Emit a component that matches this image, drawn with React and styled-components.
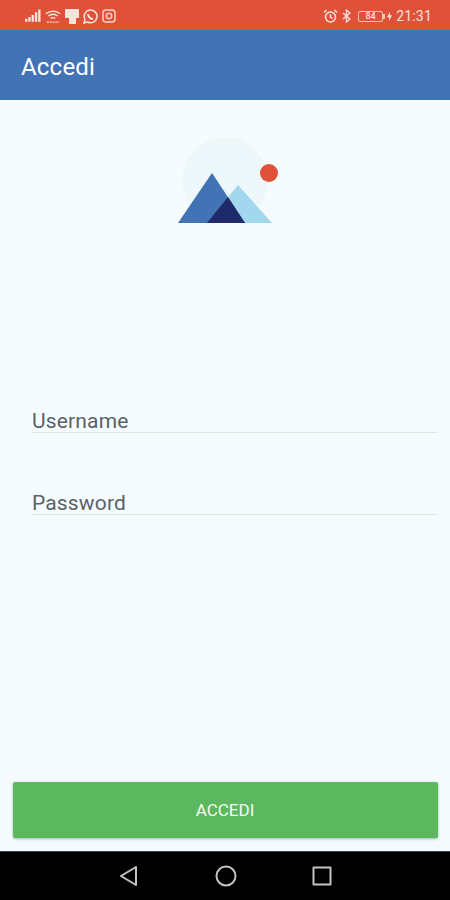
import styled, { createGlobalStyle } from 'styled-components';

const GlobalStyle = createGlobalStyle`
    html, body {
        margin: 0;
        padding: 0;
        background: #000;
    }
    * {
        box-sizing: border-box;
    }
`;

const Screen = styled.div`
    width: 450px;
    height: 900px;
    display: flex;
    flex-direction: column;
    font-family: Roboto, "Liberation Sans", sans-serif;
    background-color: #f4fcff;
    overflow: hidden;
`;
const StatusBar = styled.div`
    height: 30px;
    flex: none;
    background-color: #e0513a;
    display: flex;
    align-items: center;
    justify-content: space-between;
    padding: 2px 18px 0 25px;
    color: #fbe3dc;
`;
const StatusGroup = styled.div`
    display: flex;
    align-items: center;
    gap: 4px;
`;
const Clock = styled.span`
    font-size: 14px;
    letter-spacing: 0.2px;
`;
const Battery = styled.div`
    width: 25px;
    height: 11px;
    margin: 0 0 0 3px;
    border: 1px solid #f6c4b6;
    border-radius: 2px;
    font-size: 9px;
    font-weight: 500;
    line-height: 9px;
    text-align: center;
    position: relative;
    &:after {
        content: '';
        position: absolute;
        right: -3px;
        top: 2px;
        width: 2px;
        height: 5px;
        background-color: #f6c4b6;
    }
`;
const AppBar = styled.div`
    height: 70px;
    flex: none;
    background-color: #4173b5;
    display: flex;
    align-items: center;
    padding: 3px 21px 0;
    color: #fff;
    font-size: 24px;
    letter-spacing: 0.2px;
`;
const Main = styled.main`
    flex: 1;
    display: flex;
    flex-direction: column;
    align-items: center;
    padding-top: 36px;
`;
const Logo = styled.svg`
    width: 110px;
    height: 90px;
    display: block;
`;
const Form = styled.div`
    width: 100%;
    padding: 184px 13px 0 32px;
    display: flex;
    flex-direction: column;
    gap: 59px;
`;
const Field = styled.div`
    height: 23px;
    border-bottom: 1px solid #dce4e6;
    color: #5c6165;
    font-size: 21px;
    line-height: 22px;
    letter-spacing: 0.15px;
`;
const SubmitButton = styled.button`
    width: 425px;
    height: 56px;
    margin-top: auto;
    margin-bottom: 13px;
    border: none;
    border-radius: 2px;
    background-color: #5bb85f;
    color: #f5fbf5;
    font-family: inherit;
    font-size: 17px;
    box-shadow: 0 1px 3px rgba(0, 0, 0, 0.3);
`;
const NavBar = styled.nav`
    height: 49px;
    flex: none;
    background-color: #000;
    border-top: 1px solid #444;
    display: flex;
    align-items: center;
    justify-content: center;
    gap: 75px;
`;

const SignalIcon = () => (
    <svg width="16" height="14" viewBox="0 0 17 14" fill="#fbe3dc">
        <path d="M0 10h2.500v3H0zM3.500 8H6v5H3.500zM7 6h2.500v7H7zM10.500 3H13v10h-2.500zM14 0h2.500v13H14z" />
    </svg>
);
const WifiIcon = () => (
    <svg width="16" height="15" viewBox="0 0 17 15" fill="none" stroke="#fbe3dc" strokeWidth="1.500">
        <path d="M1 4.500C5 1 12 1 16 4.500M3.500 7C6.500 4.800 10.500 4.800 13.500 7M6 9.500C7.500 8.500 9.500 8.500 11 9.500" />
        <path d="M2 13.500h13" strokeDasharray="2 1" />
    </svg>
);
const CardIcon = () => (
    <svg width="14" height="15" viewBox="0 0 14 15" fill="#fbe3dc">
        <path d="M1 0h12a1 1 0 0 1 1 1v8h-3v6H4V9H0V1a1 1 0 0 1 1-1z" />
    </svg>
);
const WhatsappIcon = () => (
    <svg width="15" height="15" viewBox="0 0 15 15" fill="none" stroke="#fbe3dc" strokeWidth="1.500">
        <path d="M1 14l1-3.500A6.400 6.400 0 1 1 4.500 13z" />
        <path d="M5 5c0 2.500 2.500 5 5 5" strokeWidth="2" />
    </svg>
);
const InstagramIcon = () => (
    <svg width="14" height="14" viewBox="0 0 14 14" fill="none" stroke="#f8cfc2" strokeWidth="1.500">
        <rect x="1" y="1" width="12" height="12" rx="3" />
        <circle cx="7" cy="7" r="2.700" />
    </svg>
);
const AlarmIcon = () => (
    <svg width="15" height="15" viewBox="0 0 15 15" fill="none" stroke="#fbe3dc" strokeWidth="1.500">
        <circle cx="7.500" cy="8" r="5" />
        <path d="M7.500 5v3l2 1.500M1 3.500L3.500 1M14 3.500L11.500 1" />
    </svg>
);
const BluetoothIcon = () => (
    <svg width="9" height="14" viewBox="0 0 9 14" fill="none" stroke="#fbe3dc" strokeWidth="1.300">
        <path d="M1 4l7 6-3.500 3V1L8 4l-7 6" />
    </svg>
);
const BoltIcon = () => (
    <svg width="5" height="11" viewBox="0 0 6 11" fill="#fbe3dc">
        <path d="M3.500 0v4H6L2.500 11V6.500H0z" />
    </svg>
);

const App = () => (
    <Screen>
        <GlobalStyle />
        <StatusBar>
            <StatusGroup>
                <SignalIcon />
                <WifiIcon />
                <CardIcon />
                <WhatsappIcon />
                <InstagramIcon />
            </StatusGroup>
            <StatusGroup>
                <AlarmIcon />
                <BluetoothIcon />
                <Battery>84</Battery>
                <BoltIcon />
                <Clock>21:31</Clock>
            </StatusGroup>
        </StatusBar>
        <AppBar>Accedi</AppBar>
        <Main>
            <Logo viewBox="170 136 110 90">
                <circle cx="225" cy="180" r="43" fill="#eef7f9" />
                <path d="M238 185l34 38h-65z" fill="#a3d7f0" />
                <path d="M212 173l33 50h-67z" fill="#4173b5" />
                <path d="M228 197l17 26h-38z" fill="#1f2a6b" />
                <circle cx="269" cy="173" r="9" fill="#e0513a" />
            </Logo>
            <Form>
                <Field>Username</Field>
                <Field>Password</Field>
            </Form>
            <SubmitButton>ACCEDI</SubmitButton>
        </Main>
        <NavBar>
            <svg width="22" height="22" viewBox="0 0 22 22" fill="none" stroke="#c4c4c4" strokeWidth="2" strokeLinejoin="round">
                <path d="M18 2v18L3 11z" />
            </svg>
            <svg width="22" height="22" viewBox="0 0 22 22" fill="none" stroke="#c4c4c4" strokeWidth="2">
                <circle cx="11" cy="11" r="9.500" />
            </svg>
            <svg width="20" height="20" viewBox="0 0 20 20" fill="none" stroke="#c4c4c4" strokeWidth="2" strokeLinejoin="round">
                <rect x="1.500" y="1.500" width="17" height="17" />
            </svg>
        </NavBar>
    </Screen>
);

export default App;
